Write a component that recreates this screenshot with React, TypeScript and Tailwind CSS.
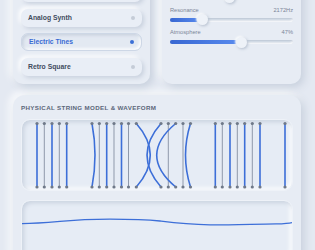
import React from "react";

// first preset and first slider sit above the visible area; their labels stay empty
const presets = [
  { name: "", active: false },
  { name: "Analog Synth", active: false },
  { name: "Electric Tines", active: true },
  { name: "Retro Square", active: false },
];

const sliders = [
  { label: "", value: "", pos: 48 },
  { label: "Resonance", value: "2172Hz", pos: 26.8 },
  { label: "Atmosphere", value: "47%", pos: 58.5 },
];

// x position, color, bow amount (px, + = right)
const strings: [number, "b" | "g", number][] = [
  [16, "b", 0], [23.3, "g", 0], [31, "b", 0], [38.3, "g", 0], [45.7, "b", 0],
  [71, "b", 3], [78.3, "g", 0], [85.7, "b", 0], [93, "g", 0], [100.5, "b", 0], [107.5, "g", 0], [115.3, "b", 14],
  [140, "b", -14], [147.3, "g", 0], [154.7, "b", -19], [162, "g", 0], [169.5, "b", -5],
  [194.3, "b", 0], [201.3, "g", 0], [209, "b", 0], [216.3, "g", 0], [223.7, "b", 0], [231.3, "g", 0], [239, "b", 0],
  [264, "b", 0],
];

const raised = "shadow-[3px_3px_8px_#c6cfdc,-3px_-3px_8px_#ffffff]";

const StringModel = () => (
  <svg width="271" height="72" viewBox="0 0 271 72" className="block">
    {strings.map(([x, c, bow], i) => (
      <path
        key={i}
        d={`M ${x} 4.5 Q ${x + bow * 2} 36.25 ${x} 68`}
        fill="none"
        stroke={c === "b" ? "#3d6fd8" : "#8f99ab"}
        strokeWidth={c === "b" ? 1.6 : 1}
      />
    ))}
    {strings.map(([x], i) => (
      <g key={"p" + i} fill="#6f7989">
        <circle cx={x} cy={4.5} r={1.6} />
        <circle cx={x} cy={68} r={1.6} />
      </g>
    ))}
  </svg>
);

const Wave = () => (
  <svg width="271" height="60" viewBox="0 0 271 60" className="block">
    <path
      d="M 0 23.7 C 12 23.6, 25 22.6, 39 21.4 C 53 20.2, 70 19.3, 89 19.2 C 108 19.2, 125 19.6, 139 21 C 150 22.4, 165 24.4, 189 24.9 C 210 25, 235 24.1, 255 23.9 C 263 23.8, 268 23.6, 271 22.6"
      fill="none"
      stroke="#3d6fd8"
      strokeWidth="1.3"
    />
  </svg>
);

export default function App() {
  return (
    <div className="h-[250px] overflow-hidden bg-[#e4e9f2] pl-[13px] pr-[14px] font-['Liberation_Sans',Arial,sans-serif]">
      <div className="mt-[-24px] grid grid-cols-[137px_1fr] gap-x-[12px]">
        <div className={`rounded-[10px] bg-[#e7ecf4] p-[8px] flex flex-col gap-[6.5px] ${raised}`}>
          {presets.map((p, i) => (
            <div
              key={i}
              className={
                p.active
                  ? "h-[18px] rounded-[7px] px-[7px] flex items-center justify-between border border-[#cdd7e6] bg-[#e3e9f2] shadow-[inset_1.5px_1.5px_3px_#c9d2df,inset_-1.5px_-1.5px_3px_#ffffff]"
                  : "h-[18px] rounded-[7px] px-[7px] flex items-center justify-between bg-[#e9eef6] shadow-[2px_2px_4px_#c8d1de,-2px_-2px_4px_#ffffff]"
              }
            >
              <span
                className={`text-[6.8px] leading-[8px] font-bold ${p.active ? "text-[#3a6bd4]" : "text-[#414c5e]"}`}
              >
                {p.name}
              </span>
              <span
                className={`w-[4px] h-[4px] rounded-full ${p.active ? "bg-[#3b6fd6]" : "bg-[#c5ccd7]"}`}
              />
            </div>
          ))}
        </div>

        <div className={`rounded-[10px] bg-[#e7ecf4] px-[8px] pt-[8px] flex flex-col gap-[4px] ${raised}`}>
          {sliders.map((s, i) => (
            <div key={i}>
              <div className="h-[7px] flex justify-between text-[5.7px] leading-[7px] text-[#7b8598]">
                <span>{s.label}</span>
                <span>{s.value}</span>
              </div>
              <div className="relative mt-[0.5px] h-[11px] flex items-center">
                <div className="w-full h-[4px] rounded-full bg-[#d9e0ea] shadow-[inset_1px_1px_2px_#bcc6d4,inset_-1px_-1px_2px_#ffffff]">
                  <div
                    className="h-full rounded-full bg-gradient-to-r from-[#3867d2] to-[#5a8cef]"
                    style={{ width: `${s.pos}%` }}
                  />
                </div>
                <div
                  className="absolute top-0 w-[11px] h-[11px] -ml-[5.5px] rounded-full bg-[#eef2f8] shadow-[1px_1px_3px_#b6c0cf,-1px_-1px_2px_#ffffff]"
                  style={{ left: `${s.pos}%` }}
                />
              </div>
            </div>
          ))}
        </div>
      </div>

      <div className={`mt-[11px] rounded-[12px] bg-[#e7ecf4] px-[8px] pt-[9px] pb-[8px] ${raised}`}>
        <div className="text-[6.2px] leading-[7px] font-bold tracking-[0.35px] text-[#5b6679] mb-[8px]">
          PHYSICAL STRING MODEL &amp; WAVEFORM
        </div>
        <div className="h-[72px] rounded-[9px] bg-[#e6ecf5] border border-[#eef2f8] shadow-[inset_2px_2px_4px_#c9d2df,inset_-2px_-2px_4px_#ffffff] overflow-hidden">
          <div className="-ml-px -mt-px">
            <StringModel />
          </div>
        </div>
        <div className="mt-[9px] h-[60px] rounded-[9px] bg-[#e6ecf5] border border-[#eef2f8] shadow-[inset_2px_2px_4px_#c9d2df,inset_-2px_-2px_4px_#ffffff] overflow-hidden">
          <div className="-ml-px -mt-px">
            <Wave />
          </div>
        </div>
      </div>
    </div>
  );
}
